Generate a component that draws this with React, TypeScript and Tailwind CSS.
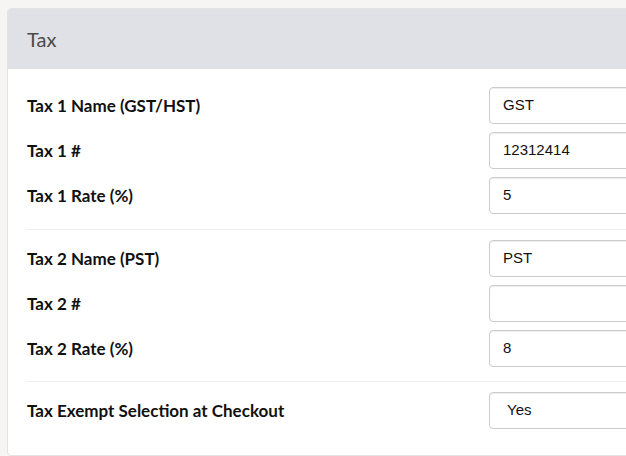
import React from "react";

const Field = ({ label, value, select }: { label: string; value: string; select?: boolean }) => (
  <div className="flex items-center h-[37px]">
    <div className="w-[462px] shrink-0 text-[17px] font-bold text-[#111] font-['Lato',sans-serif]">{label}</div>
    <div
      className={`h-[37px] w-[200px] shrink-0 rounded-[4px] border border-[#cccccc] bg-white shadow-[inset_0_1px_1px_rgba(0,0,0,0.075)] flex items-center ${select ? "pl-[17px]" : "pl-[13px]"} text-[15px] text-[#111] font-['Liberation_Sans',Arial,sans-serif]`}
    >
      {value}
    </div>
  </div>
);

export default function App() {
  return (
    <div className="w-[626px] h-[456px] overflow-hidden bg-[#f6f5f3] pt-[8px] pl-[7px]">
      <div className="w-[700px] h-[448px] bg-white border border-[#e3e3e3] rounded-[4px] overflow-hidden">
        <div className="h-[61px] bg-[#dfe1e6] flex items-center pl-[19px] -mt-px">
          <span className="text-[20px] text-[#4a4a4a] font-['Lato',sans-serif]">Tax</span>
        </div>
        <div className="pl-[19px] pt-[18px]">
          <div className="flex flex-col gap-[8px]">
            <Field label="Tax 1 Name (GST/HST)" value="GST" />
            <Field label="Tax 1 #" value="12312414" />
            <Field label="Tax 1 Rate (%)" value="5" />
          </div>
          <div className="mt-[15px] h-px bg-[#eeeeee]" />
          <div className="mt-[10px] flex flex-col gap-[8px]">
            <Field label="Tax 2 Name (PST)" value="PST" />
            <Field label="Tax 2 #" value="" />
            <Field label="Tax 2 Rate (%)" value="8" />
          </div>
          <div className="mt-[14px] h-px bg-[#eeeeee]" />
          <div className="mt-[10px]">
            <Field label="Tax Exempt Selection at Checkout" value="Yes" select />
          </div>
        </div>
      </div>
    </div>
  );
}
